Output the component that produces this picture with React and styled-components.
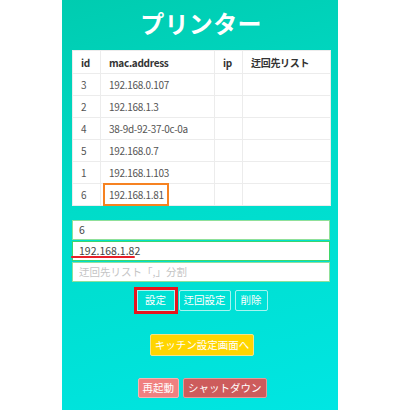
import React from "react"
import styled, { createGlobalStyle } from "styled-components"

const GlobalStyle = createGlobalStyle`
  html, body {
    margin: 0;
    padding: 0;
    background: #ffffff;
    font-family: "Noto Sans CJK JP", "Noto Sans", sans-serif;
  }
`

const Panel = styled.div`
  width: 276px;
  height: 410px;
  margin: 0 auto;
  box-sizing: border-box;
  padding: 0 8px 0 10px;
  background: linear-gradient(165deg, #00ccb0 0%, #00dcc9 45%, #00e6e3 100%);
  display: flex;
  flex-direction: column;
  align-items: stretch;
  overflow: hidden;
`

const Title = styled.h1`
  margin: 0;
  height: 50px;
  line-height: 46px;
  text-align: center;
  color: #ffffff;
  font-size: 24px;
  font-weight: 700;
  letter-spacing: 0.3px;
`

const Table = styled.table`
  width: 258px;
  border-collapse: collapse;
  background: #ffffff;
  font-size: 10px;
  letter-spacing: -0.3px;
  color: #555;
  table-layout: fixed;
`

const Th = styled.th`
  height: 22px;
  padding: 0 0 0 8px;
  text-align: left;
  font-weight: 700;
  color: #333;
  border: 1px solid #ececec;
  white-space: nowrap;
  overflow: hidden;
`

const Td = styled.td`
  height: 21px;
  padding: 0 0 0 8px;
  border: 1px solid #ececec;
  white-space: nowrap;
`

const Marked = styled.span`
  display: inline-block;
  margin: -1px 0 -1px -6px;
  padding: 0 3px 0 4px;
  line-height: 19px;
  border: 2px solid #f68221;
`

const Form = styled.div`
  margin-top: 14px;
  display: flex;
  flex-direction: column;
  gap: 1px;
`

const Field = styled.div`
  position: relative;
  height: 20px;
  box-sizing: border-box;
  background: #ffffff;
  border: 1px solid ${p => p.$line || "#8fe09a"};
  padding-left: 6px;
  line-height: 18px;
  font-size: 10.5px;
  color: ${p => (p.$placeholder ? "#c4c4c4" : "#444")};
`

const Underline = styled.span`
  position: absolute;
  left: -2px;
  bottom: 2px;
  width: 64px;
  height: 2px;
  border-radius: 1px;
  background: #e8202a;
`

const Row = styled.div`
  display: flex;
  justify-content: center;
  gap: ${p => p.$gap}px;
  margin-top: ${p => p.$top}px;
  padding-left: ${p => p.$shift || 0}px;
`

const Button = styled.button`
  height: ${p => p.$h || 21}px;
  min-width: ${p => p.$w || 0}px;
  box-sizing: border-box;
  padding: 0 4px;
  font-family: inherit;
  font-size: 10.5px;
  line-height: 1;
  color: #ffffff;
  background: ${p => p.$bg || "transparent"};
  border: 1px solid ${p => p.$line || "rgba(255,255,255,0.65)"};
  border-radius: ${p => (p.$marked ? 0 : 2)}px;
  outline: ${p => (p.$marked ? "3px solid #e8141c" : "none")};
  outline-offset: 0;
`

const rows = [
  ["3", "192.168.0.107"],
  ["2", "192.168.1.3"],
  ["4", "38-9d-92-37-0c-0a"],
  ["5", "192.168.0.7"],
  ["1", "192.168.1.103"],
]

export default function App() {
  return (
    <>
      <GlobalStyle />
      <Panel>
        <Title>プリンター</Title>
        <Table>
          <colgroup>
            <col style={{ width: 28 }} />
            <col style={{ width: 114 }} />
            <col style={{ width: 28 }} />
            <col style={{ width: 88 }} />
          </colgroup>
          <thead>
            <tr>
              <Th>id</Th>
              <Th>mac.address</Th>
              <Th>ip</Th>
              <Th>迂回先リスト</Th>
            </tr>
          </thead>
          <tbody>
            {rows.map(r => (
              <tr key={r[0]}>
                <Td>{r[0]}</Td>
                <Td>{r[1]}</Td>
                <Td />
                <Td />
              </tr>
            ))}
            <tr>
              <Td>6</Td>
              <Td>
                <Marked>192.168.1.81</Marked>
              </Td>
              <Td />
              <Td />
            </tr>
          </tbody>
        </Table>

        <Form>
          <Field>6</Field>
          <Field $line="#3ed66a">
            192.168.1.82
            <Underline />
          </Field>
          <Field $placeholder>迂回先リスト「,」分割</Field>
        </Form>

        <Row $gap={4} $top={8} $shift={2}>
          <Button $w={38} $marked>設定</Button>
          <Button $w={48}>迂回設定</Button>
          <Button $w={33}>削除</Button>
        </Row>

        <Row $gap={0} $top={23} $shift={2}>
          <Button $w={97} $h={22} $bg="#ffd500" $line="#f3e38a">キッチン設定画面へ</Button>
        </Row>

        <Row $gap={4} $top={22} $shift={2}>
          <Button $w={41} $h={20} $bg="#f08080" $line="#f6b3b3">再起動</Button>
          <Button $w={79} $h={20} $bg="#cd5c5c" $line="#e49a9a">シャットダウン</Button>
        </Row>
      </Panel>
    </>
  )
}
